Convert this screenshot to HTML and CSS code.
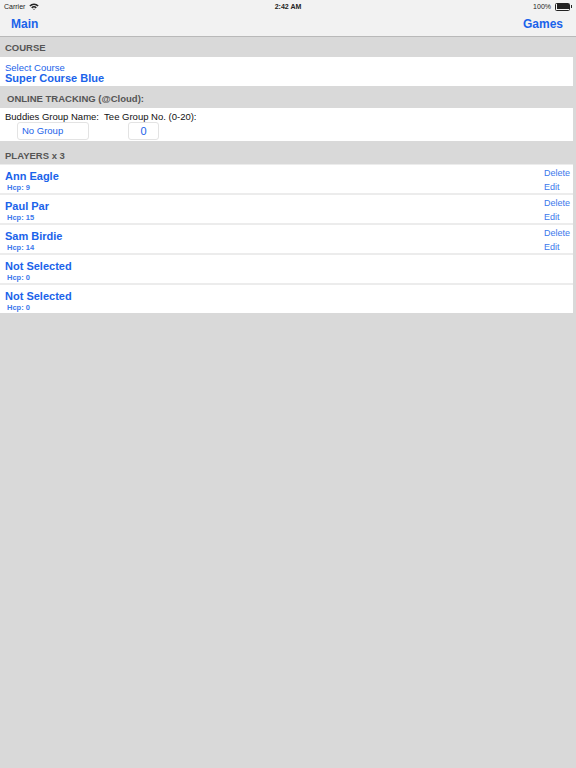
FILE: index.html
```html
<html>
	<head>
		<meta charset="utf-8">
		<title>Round Setup</title>
		<link rel="stylesheet" href="styles.css">
	</head>
	<body>
		<div class="status-bar">
			<div class="status-left">
				<span>Carrier</span>
				<svg class="wifi" width="10" height="7" viewBox="0 0 10 7">
					<path d="M0.3 2.4 A6.6 6.6 0 0 1 9.7 2.4 L8.6 3.5 A5 5 0 0 0 1.4 3.5 Z" fill="#222"/>
					<path d="M2.2 4.3 A4 4 0 0 1 7.8 4.3 L6.7 5.4 A2.4 2.4 0 0 0 3.3 5.4 Z" fill="#222"/>
					<path d="M4.1 6.1 A1.3 1.3 0 0 1 5.9 6.1 L5 7 Z" fill="#222"/>
				</svg>
			</div>
			<div class="status-time">2:42 AM</div>
			<div class="status-right">
				<span>100%</span>
				<div class="battery"><div class="battery-fill"></div></div>
				<div class="battery-tip"></div>
			</div>
		</div>
		<div class="nav-bar">
			<span class="nav-button">Main</span>
			<span class="nav-button">Games</span>
		</div>
		<div class="table">
			<div class="section-header">COURSE</div>
			<div class="cell course-cell">
				<div class="course-label">Select Course</div>
				<div class="course-name">Super Course Blue</div>
			</div>

			<div class="section-header online-header">ONLINE TRACKING (@Cloud):</div>
			<div class="cell tracking-cell">
				<div class="tracking-labels">Buddies Group Name:&nbsp; Tee Group No. (0-20):</div>
				<div class="tracking-fields">
					<div class="field group-field">No Group</div>
					<div class="field tee-field">0</div>
				</div>
			</div>

			<div class="section-header players-header">PLAYERS x 3</div>
			<div class="player-list">
				<div class="cell player-row">
					<div class="player-info">
						<div class="player-name">Ann Eagle</div>
						<div class="player-hcp">Hcp: 9</div>
					</div>
					<div class="player-actions">
						<span>Delete</span>
						<span>Edit</span>
					</div>
				</div>
				<div class="cell player-row">
					<div class="player-info">
						<div class="player-name">Paul Par</div>
						<div class="player-hcp">Hcp: 15</div>
					</div>
					<div class="player-actions">
						<span>Delete</span>
						<span>Edit</span>
					</div>
				</div>
				<div class="cell player-row">
					<div class="player-info">
						<div class="player-name">Sam Birdie</div>
						<div class="player-hcp">Hcp: 14</div>
					</div>
					<div class="player-actions">
						<span>Delete</span>
						<span>Edit</span>
					</div>
				</div>
				<div class="cell player-row">
					<div class="player-info">
						<div class="player-name">Not Selected</div>
						<div class="player-hcp">Hcp: 0</div>
					</div>
				</div>
				<div class="cell player-row">
					<div class="player-info">
						<div class="player-name">Not Selected</div>
						<div class="player-hcp">Hcp: 0</div>
					</div>
				</div>
			</div>
		</div>
	</body>
</html>
```

FILE: styles.css
```css
body {
	margin: 0;
	background-color: #d9d9d9;
	font-family: "Liberation Sans", Arial, sans-serif;
	width: 576px;
	height: 768px;
}

.status-bar {
	display: flex;
	align-items: center;
	justify-content: space-between;
	height: 13px;
	padding: 0 4px;
	background-color: #f2f2f2;
	font-size: 7px;
	color: #222;
}

.status-left, .status-right {
	display: flex;
	align-items: center;
	gap: 4px;
	width: 100px;
}

.status-right {
	justify-content: flex-end;
	gap: 2px;
}

.status-time {
	font-weight: bold;
}

.battery {
	width: 12px;
	height: 5px;
	border: 1px solid #222;
	border-radius: 1.5px;
	padding: 0.5px;
	margin-left: 2px;
}

.battery-fill {
	width: 100%;
	height: 100%;
	background-color: #222;
}

.battery-tip {
	width: 1px;
	height: 3px;
	background-color: #222;
	margin-left: -1px;
}

.nav-bar {
	display: flex;
	justify-content: space-between;
	align-items: center;
	height: 22px;
	padding: 0 13px 1px 11px;
	background-color: #f2f2f2;
	border-bottom: 1px solid #b9b9b9;
}

.nav-button {
	color: #1a63ea;
	font-weight: bold;
	font-size: 12px;
}

.table {
	padding-right: 3px;
}

.section-header {
	height: 20px;
	line-height: 22px;
	padding-left: 5px;
	font-size: 9.5px;
	font-weight: bold;
	color: #555;
}

.online-header {
	height: 22px;
	line-height: 26px;
	padding-left: 7px;
}

.players-header {
	height: 23px;
	line-height: 29px;
}

.cell {
	background-color: #fff;
}

.course-cell {
	height: 29px;
	padding-left: 5px;
	box-sizing: border-box;
	padding-top: 6px;
	color: #1a63ea;
}

.course-label {
	font-size: 9.5px;
	line-height: 10px;
}

.course-name {
	font-size: 11px;
	font-weight: bold;
	line-height: 11px;
}

.tracking-cell {
	height: 33px;
	box-sizing: border-box;
	padding: 3px 0 0 5px;
}

.tracking-labels {
	font-size: 9.5px;
	line-height: 11px;
	color: #111;
}

.tracking-fields {
	display: flex;
	gap: 39px;
	margin-left: 12px;
}

.field {
	height: 16px;
	line-height: 16px;
	border: 1px solid #e3e3e3;
	border-radius: 3px;
	color: #1a63ea;
	font-size: 9.5px;
	box-sizing: content-box;
}

.group-field {
	width: 66px;
	padding-left: 4px;
}

.tee-field {
	width: 29px;
	text-align: center;
	font-size: 11px;
}

.player-list {
	display: flex;
	flex-direction: column;
	gap: 2px;
	background-color: #ececec;
	padding: 1px 0 0;
}

.player-row {
	display: flex;
	justify-content: space-between;
	height: 28px;
	color: #1a63ea;
}

.player-info {
	padding: 5px 0 0 5px;
}

.player-name {
	font-size: 11px;
	font-weight: bold;
	line-height: 12px;
}

.player-hcp {
	font-size: 7.5px;
	font-weight: bold;
	line-height: 10px;
	margin: 1px 0 0 2px;
	color: #3b78ec;
}

.player-actions {
	display: flex;
	flex-direction: column;
	gap: 3px;
	width: 29px;
	padding-top: 3px;
	font-size: 9px;
	line-height: 11px;
	color: #3b78ec;
}
```
